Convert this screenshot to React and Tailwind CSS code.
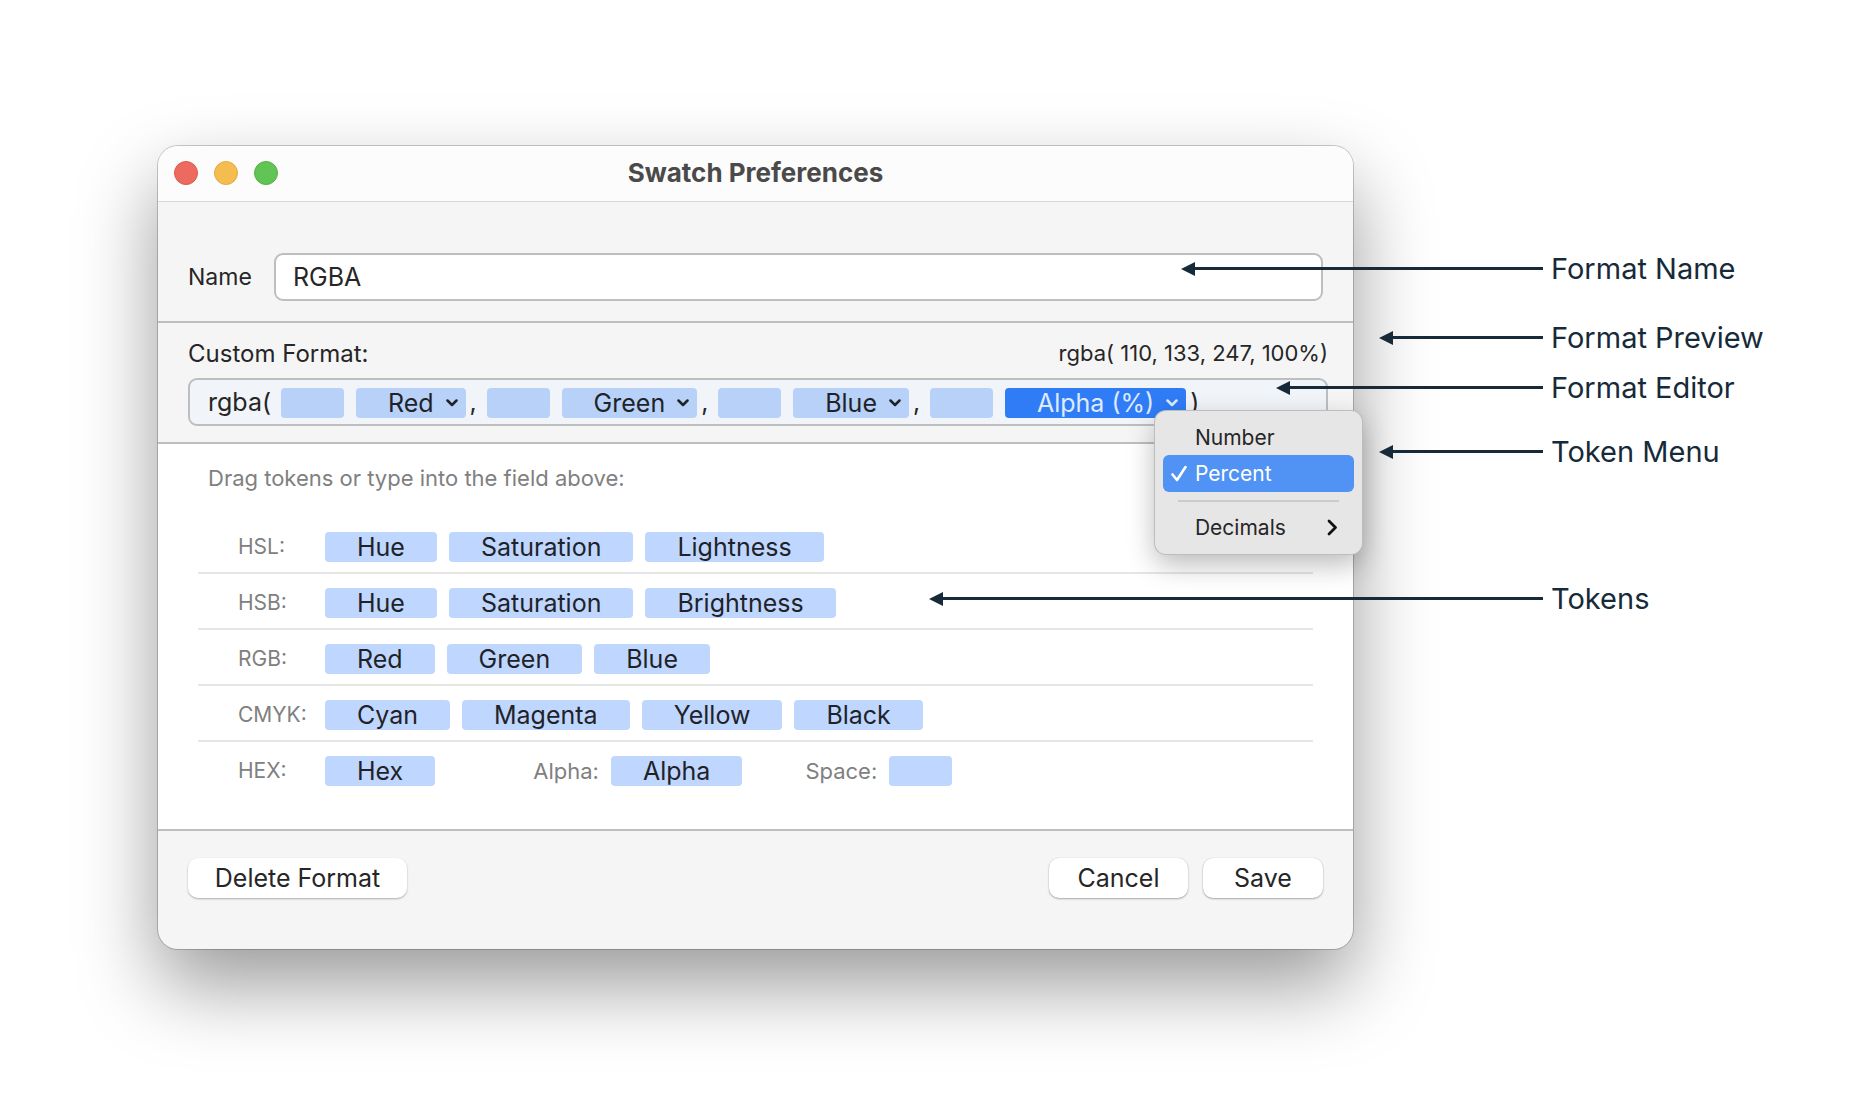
import React from "react";

const tokenRows = [
  { label: "HSL:", tokens: ["Hue", "Saturation", "Lightness"] },
  { label: "HSB:", tokens: ["Hue", "Saturation", "Brightness"] },
  { label: "RGB:", tokens: ["Red", "Green", "Blue"] },
  { label: "CMYK:", tokens: ["Cyan", "Magenta", "Yellow", "Black"] },
];

const callouts = [
  { text: "Format Name", place: "mt-[105px]", arrow: "w-[362px]" },
  { text: "Format Preview", place: "mt-[33px]", arrow: "w-[164px]" },
  { text: "Format Editor", place: "mt-[14px]", arrow: "w-[267px]" },
  { text: "Token Menu", place: "mt-[28px]", arrow: "w-[164px]" },
  { text: "Tokens", place: "mt-[111px]", arrow: "w-[614px]" },
];

function Chevron() {
  return (
    <svg width="12" height="8" viewBox="0 0 12 8" fill="none" aria-hidden="true">
      <path d="M1.5 1.5 6 6l4.5-4.5" stroke="currentColor" strokeWidth="2.5" strokeLinecap="round" strokeLinejoin="round" />
    </svg>
  );
}

function Token({ children }) {
  return (
    <button type="button" className="h-[30px] min-w-[63px] shrink-0 rounded-[4px] bg-[#bfd7ff] px-8 text-[25px] leading-[30px] text-[#1f2328]">
      {children}
    </button>
  );
}

function SpaceToken() {
  return <button type="button" aria-label="Space" className="h-[30px] w-[63px] shrink-0 rounded-[4px] bg-[#b8d1f8]" />;
}

function EditorToken({ name, active }) {
  return (
    <button
      type="button"
      aria-haspopup="menu"
      aria-expanded={active ? "true" : "false"}
      className={
        "ml-3 flex h-[30px] shrink-0 items-center gap-3 rounded-[4px] pl-8 pr-2 leading-[30px] whitespace-nowrap " +
        (active ? "bg-[#2f7cf6] text-[#dfeafd]" : "bg-[#b8d1f8] text-[#1f2328]")
      }
    >
      {name}
      <Chevron />
    </button>
  );
}

function Comma() {
  return <span className="w-[21px] shrink-0 pl-1">,</span>;
}

function TokenMenu() {
  return (
    <div
      role="menu"
      className="absolute top-[23px] left-[162px] z-10 w-[207px] rounded-[11px] bg-[#e6e6e6] p-2 text-[21px] leading-[37px] text-[#262626] shadow-[0_0_0_1px_#bdbdbd,0_10px_28px_rgba(0,0,0,0.28)]"
    >
      <button type="button" role="menuitem" className="block h-9 w-full pl-8 text-left">
        Number
      </button>
      <button type="button" role="menuitem" className="flex h-[37px] w-full items-center rounded-[6px] bg-[#5192f5] text-left text-white">
        <span className="flex w-8 justify-center">
          <svg width="16" height="17" viewBox="0 0 16 17" fill="none" aria-hidden="true">
            <path d="M1.5 9.5 6 15 14.5 2" stroke="currentColor" strokeWidth="2.6" strokeLinecap="round" strokeLinejoin="round" />
          </svg>
        </span>
        Percent
      </button>
      <hr className="mx-[15px] my-[8px] border-t-2 border-[#cbcbcb]" />
      <button type="button" role="menuitem" className="flex h-9 w-full items-center justify-between pr-4 pl-8 text-left">
        Decimals
        <svg width="11" height="17" viewBox="0 0 11 17" fill="none" aria-hidden="true">
          <path d="M2 2l6.5 6.5L2 15" stroke="#111" strokeWidth="2.8" strokeLinecap="round" strokeLinejoin="round" />
        </svg>
      </button>
    </div>
  );
}

function FormatEditor() {
  return (
    <div
      role="group"
      aria-labelledby="format-label"
      className="flex h-12 items-center rounded-[9px] border-2 border-[#bcbec0] bg-[#f1f5f9] pt-px pl-[18px] text-[25px] text-[#262626]"
    >
      <span className="w-[73px] shrink-0">rgba(</span>
      <SpaceToken />
      <EditorToken name="Red" />
      <Comma />
      <SpaceToken />
      <EditorToken name="Green" />
      <Comma />
      <SpaceToken />
      <EditorToken name="Blue" />
      <Comma />
      <SpaceToken />
      <div className="relative">
        <EditorToken name="Alpha (%)" active />
        <TokenMenu />
      </div>
      <span className="pl-1">)</span>
    </div>
  );
}

function PreferencesWindow() {
  return (
    <main className="min-w-0 flex-1 rounded-[20px] bg-[#f5f5f5] shadow-[0_0_0_1px_rgba(0,0,0,0.2),0_36px_80px_rgba(0,0,0,0.4)]">
      <header className="grid h-14 grid-cols-[1fr_auto_1fr] items-center rounded-t-[20px] border-b border-[#d6d6d6] bg-[#fcfcfc] px-4 pb-0.5">
        <div className="flex gap-4">
          <button type="button" aria-label="Close" className="size-6 rounded-full border border-[#e0584d] bg-[#ed6a5f]" />
          <button type="button" aria-label="Minimize" className="size-6 rounded-full border border-[#e3ac3f] bg-[#f5bd4f]" />
          <button type="button" aria-label="Zoom" className="size-6 rounded-full border border-[#54b245] bg-[#61c454]" />
        </div>
        <h1 className="text-[26px] leading-8 font-bold text-[#4a4a4a]">Swatch Preferences</h1>
      </header>

      <section className="flex items-center border-b-2 border-[#bebebe] px-[30px] pt-[51px] pb-5">
        <label htmlFor="format-name" className="w-[86px] shrink-0 text-[23px] text-[#262626]">
          Name
        </label>
        <input
          id="format-name"
          defaultValue="RGBA"
          className="h-12 min-w-0 flex-1 rounded-[9px] border-2 border-[#bebebe] bg-white px-[17px] text-[25px] text-[#262626] outline-none"
        />
      </section>

      <section className="border-b-2 border-[#bebebe] pt-4 pr-[25px] pb-4 pl-[30px] text-[#262626]">
        <div className="mb-2.5 flex items-center justify-between leading-[29px]">
          <span id="format-label" className="text-[24px]">Custom Format:</span>
          <output className="text-[22px]">rgba( 110, 133, 247, 100%)</output>
        </div>
        <FormatEditor />
      </section>

      <section className="bg-white px-10 pt-[19px] pb-[43px] text-[22px] leading-[30px] text-[#808080]">
        <p className="mb-[25px] pl-[10px]">Drag tokens or type into the field above:</p>
        {tokenRows.map((row) => (
          <div key={row.label} className="flex items-center gap-3 border-b-2 border-[#e6e6e6] pt-[14px] pb-[10px] pl-10">
            <span className="w-[75px] shrink-0 text-[21px]">{row.label}</span>
            {row.tokens.map((name) => (
              <Token key={name}>{name}</Token>
            ))}
          </div>
        ))}
        <div className="flex items-center gap-3 pt-[14px] pl-10">
          <span className="w-[75px] shrink-0 text-[21px]">HEX:</span>
          <Token>Hex</Token>
          <span className="ml-[86px]">Alpha:</span>
          <Token>Alpha</Token>
          <span className="ml-[51px]">Space:</span>
          <button type="button" aria-label="Space" className="h-[30px] w-[63px] rounded-[4px] bg-[#bfd7ff]" />
        </div>
      </section>

      <footer className="flex h-[120px] items-start gap-[15px] rounded-b-[20px] border-t-2 border-[#bebebe] px-[30px] pt-[27px] text-[25px] leading-10 text-[#262626]">
        <button type="button" className="mr-auto h-10 w-[219px] rounded-[10px] bg-white shadow-[0_1px_2px_rgba(0,0,0,0.3)]">
          Delete Format
        </button>
        <button type="button" className="h-10 w-[139px] rounded-[10px] bg-white shadow-[0_1px_2px_rgba(0,0,0,0.3),0_0_1px_rgba(0,0,0,0.2)]">
          Cancel
        </button>
        <button type="button" className="h-10 w-[120px] rounded-[10px] bg-white shadow-[0_1px_2px_rgba(0,0,0,0.3),0_0_1px_rgba(0,0,0,0.2)]">
          Save
        </button>
      </footer>
    </main>
  );
}

function Callouts() {
  return (
    <ul className="relative z-20 w-[523px] shrink-0 text-[29px] leading-9 text-[#172a3a]">
      {callouts.map((item) => (
        <li key={item.text} className={"relative pl-[198px] " + item.place}>
          <div className={"absolute top-0 right-[333px] flex h-[35px] items-center " + item.arrow}>
            <svg width="14" height="14" viewBox="0 0 14 14" aria-hidden="true" className="shrink-0">
              <path d="M0 7 14 0v14z" fill="currentColor" />
            </svg>
            <span className="h-[3px] flex-1 bg-[#172a3a]" />
          </div>
          {item.text}
        </li>
      ))}
    </ul>
  );
}

export default function App() {
  return (
    <div className="flex min-h-screen items-start bg-white pt-[146px] pl-[158px] font-['Inter',sans-serif]">
      <PreferencesWindow />
      <Callouts />
    </div>
  );
}
